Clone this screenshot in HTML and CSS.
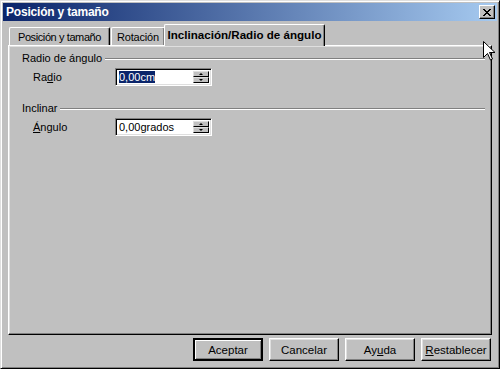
FILE: index.html
```html
<!DOCTYPE html>
<html>
<head>
<meta charset="utf-8">
<link rel="stylesheet" href="styles.css">
</head>
<body>
<div class="window">
  <div class="titlebar">
    <span class="title">Posición y tamaño</span>
    <span class="close"><svg width="8" height="7" viewBox="0 0 8 7"><path d="M0 0h2v1h1v1h2v-1h1v-1h2v1h-1v1h-1v1h-1v1h1v1h1v1h1v1h-2v-1h-1v-1h-2v1h-1v1h-2v-1h1v-1h1v-1h1v-1h-1v-1h-1v-1h-1z" fill="#000"/></svg></span>
  </div>
  <div class="body">
    <div class="tabs">
      <div class="tab t1">Posición y tamaño</div>
      <div class="tab t2">Rotación</div>
      <div class="tab active">Inclinación/Radio de ángulo</div>
    </div>
    <div class="panel">
      <div class="group">
        <div class="legend"><span>Radio de ángulo</span><i class="rule"></i></div>
        <div class="row">
          <label class="lbl">Ra<u>d</u>io</label>
          <div class="field"><span class="val"><span class="sel">0,00cm</span></span><span class="spin"><b class="up"></b><b class="down"></b></span></div>
        </div>
      </div>
      <div class="group second">
        <div class="legend"><span>Inclinar</span><i class="rule"></i></div>
        <div class="row">
          <label class="lbl"><u>Á</u>ngulo</label>
          <div class="field"><span class="val">0,00grados</span><span class="spin"><b class="up"></b><b class="down"></b></span></div>
        </div>
      </div>
    </div>
    <div class="buttons">
      <button class="btn default">Aceptar</button>
      <button class="btn">Cancelar</button>
      <button class="btn">Ay<u>u</u>da</button>
      <button class="btn"><u>R</u>establecer</button>
    </div>
  </div>
  <svg class="cursor" width="12" height="20" viewBox="0 0 12 20"><path d="M0.5 0.5v16l4-4 3 6.5 2-1-3-6.5h5.5z" fill="#fff" stroke="#000" stroke-width="1"/></svg>
</div>
</body>
</html>
```
FILE: styles.css
```css
html, body { margin: 0; padding: 0; background: #c0c0c0; }
body { font-family: "Liberation Sans", Arial, sans-serif; font-size: 11px; color: #000; }
.window {
  position: relative;
  width: 500px; height: 369px; box-sizing: border-box;
  border: 1px solid; border-color: #dfdfdf #000 #000 #dfdfdf;
  box-shadow: inset 1px 1px #fff, inset -1px -1px #808080;
  padding: 2px;
  display: flex; flex-direction: column;
  background: #c0c0c0;
}
.titlebar {
  height: 18px; display: flex; align-items: center; justify-content: space-between;
  background: linear-gradient(to right, #0a246a, #a6caf0);
  padding: 0 2px 0 3px;
}
.title { color: #fff; font-weight: bold; font-size: 12px; letter-spacing: -0.2px; }
.close {
  width: 16px; height: 14px; box-sizing: border-box; background: #c0c0c0;
  border: 1px solid; border-color: #fff #000 #000 #fff;
  box-shadow: inset -1px -1px #808080;
  display: flex; align-items: center; justify-content: center;
}
.body { flex: 1; display: flex; flex-direction: column; padding: 3px 5px 0 5px; }
.tabs { display: flex; align-items: flex-end; height: 21px; padding-left: 1px; position: relative; z-index: 1; }
.tab {
  height: 18px; box-sizing: border-box; padding-top: 2px; text-align: center;
  border: 1px solid; border-bottom: none; border-color: #fff #000 #000 #fff;
  box-shadow: inset -1px 0 #808080;
  border-radius: 2px 2px 0 0; line-height: 14px;
  background: #c0c0c0;
  margin-right: 1px;
}
.t1 { width: 101px; letter-spacing: -0.4px; }
.t2 { width: 54px; letter-spacing: -0.2px; }
.tab.active {
  width: 161px;
  height: 22px; margin-bottom: -1px; margin-left: -2px; margin-right: 0;
  font-weight: bold; font-size: 11.6px; padding-top: 3px;
}
.panel {
  height: 290px; box-sizing: border-box;
  border: 1px solid; border-color: #fff #000 #000 #fff;
  box-shadow: inset -1px -1px #808080, inset 1px 1px #dfdfdf;
  padding: 5px 6px 0 13px;
}
.legend { display: flex; align-items: center; height: 14px; }
.legend .rule { flex: 1; height: 0; border-top: 1px solid #808080; border-bottom: 1px solid #fff; margin-left: 3px; margin-top: 1px; }
.row { display: flex; align-items: center; margin-top: 3px; padding-left: 11px; }
.lbl { width: 82px; }
.second { margin-top: 15px; }
.field {
  width: 97px; height: 18px; box-sizing: border-box; display: flex;
  border: 1px solid; border-color: #808080 #fff #fff #808080;
  box-shadow: inset 1px 1px #000, inset -1px -1px #dfdfdf;
  background: #fff; padding: 2px 2px 2px 2px;
}
.val { flex: 1; line-height: 13px; padding-left: 1px; font-size: 11px; }
.sel { background: #0a246a; color: #fff; }
.spin { width: 16px; display: flex; flex-direction: column; }
.spin b {
  flex: 1; background: #c0c0c0; box-sizing: border-box;
  border: 1px solid; border-color: #dfdfdf #000 #000 #dfdfdf;
  position: relative;
}
.spin b::after {
  content: ""; position: absolute; left: 5px; top: 2px; width: 0; height: 0;
  border-left: 2px solid transparent; border-right: 2px solid transparent;
}
.spin .up::after { border-bottom: 2px solid #000; top: 1px; }
.spin .down::after { border-top: 2px solid #000; top: 1px; }
.buttons { display: flex; justify-content: flex-end; gap: 6px; margin-top: 3px; padding-right: 1px; }
.btn {
  width: 70px; height: 23px; box-sizing: border-box;
  font-family: "Liberation Sans", Arial, sans-serif; font-size: 11.5px; color: #000;
  background: #c0c0c0; padding: 0;
  border: 1px solid; border-color: #fff #000 #000 #fff;
  box-shadow: inset -1px -1px #808080, inset 1px 1px #dfdfdf;
}
.btn.default {
  border: 2px solid #000; box-shadow: inset 1px 1px #fff, inset -1px -1px #808080;
}
.cursor { position: absolute; left: 482px; top: 40px; }
```
